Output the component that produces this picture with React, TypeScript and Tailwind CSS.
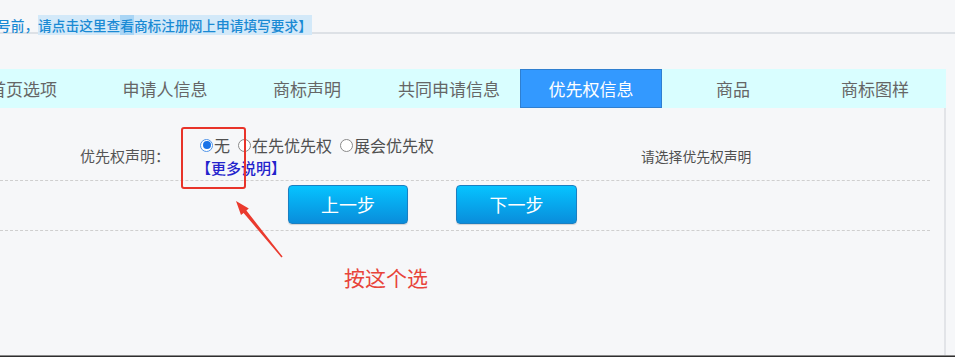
import React from "react";

const tabs = ["首页选项", "申请人信息", "商标声明", "共同申请信息", "优先权信息", "商品", "商标图样"];

function Radio({ checked, label }: { checked?: boolean; label: string }) {
  return (
    <span className="flex items-center">
      <span
        className={
          checked
            ? "w-[13px] h-[13px] rounded-full border border-[#4f94e8] bg-white flex items-center justify-center"
            : "w-[13px] h-[13px] rounded-full border border-[#8a8a8a] bg-white"
        }
      >
        {checked ? <span className="w-[8px] h-[8px] rounded-full bg-[#1a73e8]" /> : null}
      </span>
      <span className="ml-[1px]">{label}</span>
    </span>
  );
}

export default function App() {
  return (
    <div className="relative w-[955px] h-[357px] overflow-hidden bg-[#f6f7f9] font-['Noto_Sans_CJK_SC','Noto_Sans',sans-serif]">
      {/* top notice */}
      <div className="h-[32px] pt-[17px] text-[13.7px] leading-[16px] font-medium text-[#1a8ad4] whitespace-nowrap ml-[-3px]">
        <span>号前，</span>
        <span className="bg-[#d3e9f9]">请点击这里查</span>
        <span className="bg-[#a9d5f5]">看</span>
        <span className="bg-[#d3e9f9]">商标注册网上申请填写要求】</span>
      </div>
      <div className="h-[2px] bg-[#dde1e6]" />

      {/* tabs */}
      <div className="mt-[35px] w-[946px] h-[39px] bg-[#d9feff] overflow-hidden">
        <div className="flex ml-[-48px] h-full">
          {tabs.map((t, i) =>
            i === 4 ? (
              <div
                key={t}
                className="w-[142px] shrink-0 h-full flex items-center justify-center bg-[#3399ff] border border-[#2f7fd0] text-white text-[17px]"
              >
                {t}
              </div>
            ) : (
              <div key={t} className="w-[142px] shrink-0 h-full flex items-center justify-center text-[#666] text-[17px]">
                {t}
              </div>
            )
          )}
        </div>
      </div>

      {/* content */}
      <div className="w-[946px] h-[247px] border-r-2 border-[#e2e4e8]">
        <div className="flex h-[72px]">
          <div className="w-[196px] pl-[80px] pt-[38px] text-[15px] leading-[20px] text-[#555] whitespace-nowrap">
            优先权声明：
          </div>
          <div className="w-[445px] pt-[26px]">
            <div className="flex items-center h-[22px] text-[16px] leading-[22px] text-[#505050] gap-[8px] pl-[4px]">
              <Radio checked label="无" />
              <Radio label="在先优先权" />
              <Radio label="展会优先权" />
            </div>
            <div className="h-[23px] text-[15px] leading-[23px] font-medium text-[#2323cc]">【更多说明】</div>
          </div>
          <div className="pt-[39px] text-[13.8px] leading-[18px] text-[#505050]">请选择优先权声明</div>
        </div>
        <div className="w-[930px] border-t border-dashed border-[#cfcfcf]" />
        <div className="flex h-[49px] pt-[4px] pl-[288px]">
          <button className="w-[120px] h-[39px] rounded-[4px] border border-[#1a7fc2] bg-linear-to-b from-[#07c3ff] to-[#0a8ddb] text-white text-[18px] shadow-[0_1px_1px_rgba(0,0,0,0.15)]">
            上一步
          </button>
          <button className="ml-[48px] w-[121px] h-[39px] rounded-[4px] border border-[#1a7fc2] bg-linear-to-b from-[#07c3ff] to-[#0a8ddb] text-white text-[18px] shadow-[0_1px_1px_rgba(0,0,0,0.15)]">
            下一步
          </button>
        </div>
        <div className="w-[930px] border-t border-dashed border-[#cfcfcf]" />
      </div>

      {/* bottom bar */}
      <div className="h-[2px] border-t border-[#8a8a8a] bg-[#2e2e2e]" />

      {/* annotations */}
      <div className="absolute left-[181px] top-[127px] w-[65px] h-[62px] border-2 border-[#e8342a] rounded-[3px]" />
      <svg className="absolute left-0 top-0 pointer-events-none" width="955" height="357" viewBox="0 0 955 357">
        <polygon points="236,201 248.8,208.6 246.4,210.6 282.6,256.6 281.4,257.4 243.6,213 241,215" fill="#ea3a2e" />
      </svg>
      <div className="absolute left-[344px] top-[263px] text-[21px] leading-[28px] text-[#e8443a]">按这个选</div>
    </div>
  );
}
